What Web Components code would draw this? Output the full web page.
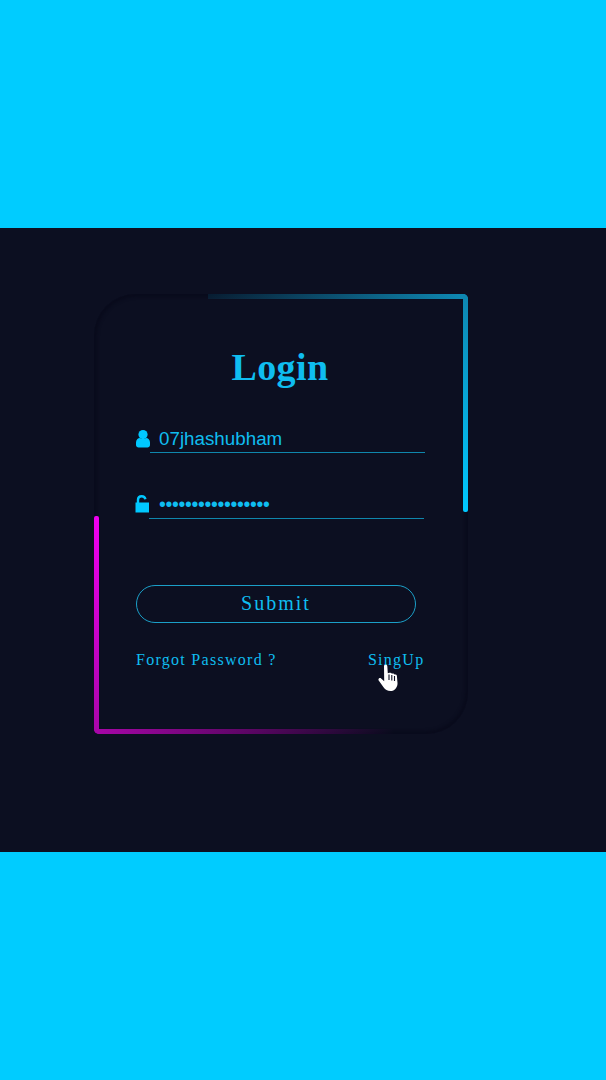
<!DOCTYPE html>
<html lang="en"><head><meta charset="utf-8"><title>Login</title>
<style>html,body{margin:0;padding:0;background:#00ccff}</style></head>
<body>
<login-page></login-page>
<script>
class GlowCard extends HTMLElement{constructor(){super();this.attachShadow({mode:'open'}).innerHTML=`<style>
:host{display:block;position:relative;box-sizing:border-box;width:373.5px;height:440px;padding:0 43px 0 42px;background:#0c0f21;
border-radius:42px 5px 42px 5px;box-shadow:inset 0 0 3px 3px #090b1c;font-family:"Liberation Serif",serif}
.g{position:absolute}
.t{left:114px;right:0;top:0;height:5px;border-radius:0 5px 0 0;background:linear-gradient(90deg,rgba(0,180,235,.1),rgba(13,140,185,.55) 50%,#0e8ab5)}
.r{right:0;top:0;width:5px;height:218px;border-radius:0 5px 2px 2px;background:linear-gradient(180deg,#0e86b0,#00c8ff)}
.l{left:0;bottom:0;width:5px;height:218px;border-radius:2px 2px 0 5px;background:linear-gradient(0deg,#a806a8,#f000f0)}
.b{left:0;bottom:0;height:5px;width:300px;border-radius:0 0 0 5px;background:linear-gradient(270deg,rgba(168,0,168,0),rgba(150,0,150,.55) 45%,#a806a8)}
</style><span class="g t"></span><span class="g r"></span><span class="g l"></span><span class="g b"></span><slot></slot>`}}
customElements.define('glow-card',GlowCard);

class IconField extends HTMLElement{constructor(){super();this.attachShadow({mode:'open'}).innerHTML=`<style>
:host{display:flex;align-items:flex-end;height:30px;color:#0fbdf0}
.i{flex:none;display:block;width:14px;height:18px;margin-bottom:5px;color:#00c8ff}
:host(.f2) .i{margin-bottom:6px}
.f{flex:1;box-sizing:border-box;height:30px;border-bottom:1px solid #0f86ac;padding:0 0 0 9px;font:18.8px/31px "Liberation Sans",sans-serif;white-space:nowrap}
:host(.f2) .f{padding-left:10px}
</style><span class="i"><slot name="icon"></slot></span><div class="f"><slot></slot></div>`}}
customElements.define('icon-field',IconField);

class PillButton extends HTMLElement{constructor(){super();this.attachShadow({mode:'open'}).innerHTML=`<style>
:host{display:block;box-sizing:border-box;width:280px;height:38px;border:1px solid #1b9fc8;border-radius:19px;text-align:center;
font:20px/35px "Liberation Serif",serif;letter-spacing:2px;color:#0fbdf0}
</style><slot></slot>`}}
customElements.define('pill-button',PillButton);

class LoginPage extends HTMLElement{constructor(){super();this.attachShadow({mode:'open'}).innerHTML=`<style>
:host{display:flex;flex-direction:column;height:1080px;background:#00ccff}
.band{height:228px;flex:none}
.dark{height:624px;flex:none;box-sizing:border-box;background:#0c0f21;padding:65.5px 0 0 94px}
h1{margin:0;padding-top:51.5px;height:44px;box-sizing:content-box;font:bold 38px/44px "Liberation Serif",serif;letter-spacing:.4px;color:#0fbdf0;text-align:center;width:288px}
.f1{margin-top:34px}
.f2{margin:36px 1px 0 -1px}
pill-button{margin-top:66px}
.links{position:relative;display:flex;justify-content:space-between;margin-top:27px;font:16px/20px "Liberation Serif",serif;letter-spacing:1.28px;color:#0fbdf0}
.hand{position:absolute;left:242px;top:14px;width:22px;height:28px}
.dots{font-size:19.5px;letter-spacing:-.33px;line-height:29px}
svg{display:block}
</style>
<div class="band"></div>
<div class="dark">
<glow-card>
<h1>Login</h1>
<icon-field class="f1"><svg slot="icon" width="14" height="18" viewBox="0 0 14 18"><circle cx="7" cy="4.600" r="4.600" fill="currentColor"/><path d="M0 15v-2.500C0 9.800 1.800 8 4 8c.9.700 1.900 1.100 3 1.100S9.100 8.700 10 8c2.200 0 4 1.800 4 4.500V15c0 1.600-1.200 2.500-2.500 2.500h-9C1.200 17.500 0 16.600 0 15z" fill="currentColor"/></svg>07jhashubham</icon-field>
<icon-field class="f2"><svg slot="icon" width="14" height="18" viewBox="0 0 14 18"><path d="M.5 7.500h13.500v10H.5z" fill="currentColor"/><path d="M3 8V4.800C3 2.700 4.600 1.300 6.700 1.300c1.900 0 3.300 1 3.700 2.900" fill="none" stroke="currentColor" stroke-width="2.400"/></svg><span class="dots">•••••••••••••••••</span></icon-field>
<pill-button>Submit</pill-button>
<div class="links"><span>Forgot Password ?</span><span>SingUp</span>
<svg class="hand" viewBox="0 0 22 28"><path d="M6 2C6 .2 9.200 .2 9.300 2l.5 7.300 1.700-.5c1.200-.3 2.100.1 2.400.9 1.200-.4 2.300 0 2.500.9 1.200-.3 2.400.2 2.500 1.300l.6 7.100c.2 4-2.700 8-7 8-3.200 0-5.200-1.300-6.800-3.400L.7 16.500c-1-1.500 1-3.200 2.400-2l3.100 2.800z" fill="#fff"/><path d="M11 10.500v5.500M13.800 11v5.500M16.500 12v5" stroke="#0c0f21" stroke-width="1.100" fill="none"/></svg>
</div>
</glow-card>
</div>
<div class="band"></div>`}}
customElements.define('login-page',LoginPage);
</script>
</body></html>
